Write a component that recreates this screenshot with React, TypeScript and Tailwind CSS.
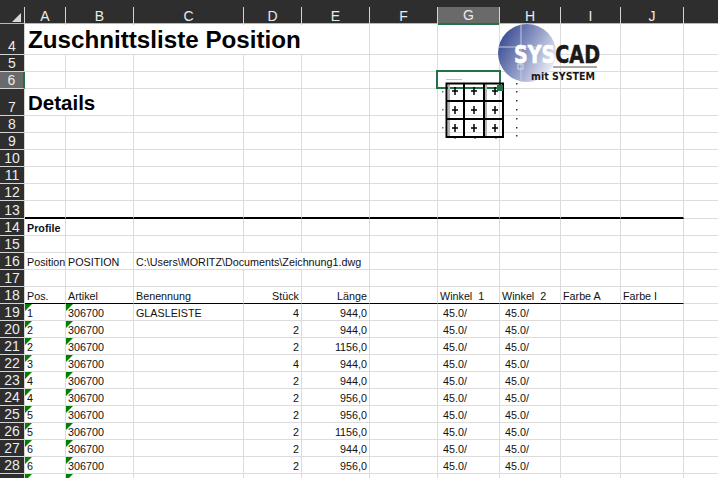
const GRID = "grid grid-cols-[25px_41px_68px_110px_58px_68px_68px_62px_61px_60px_63px_34px]";
const FONT = "font-['Liberation_Sans',Arial,sans-serif]";

const columns = ["A", "B", "C", "D", "E", "F", "G", "H", "I", "J", ""];

const details = [
  ["1", "GLASLEISTE", "4", "944,0"],
  ["2", "", "2", "944,0"],
  ["2", "", "2", "1156,0"],
  ["3", "", "4", "944,0"],
  ["4", "", "2", "944,0"],
  ["4", "", "2", "956,0"],
  ["5", "", "2", "956,0"],
  ["5", "", "2", "1156,0"],
  ["6", "", "2", "944,0"],
  ["6", "", "2", "956,0"],
];

function RowHead({ n, active }: { n?: number; active?: boolean }) {
  return (
    <div
      className={`flex items-end justify-center border-b border-[#d4d4d4] border-r text-[14px] leading-[16px] text-[#ececec] ${
        active ? "bg-[#6a6a6a] border-r-2 border-r-[#217346]" : "bg-[#2e2e2e] border-r-[#d4d4d4]"
      }`}
    >
      {n}
    </div>
  );
}

function Cell({
  children,
  right,
  noLine,
  tick,
  className = "",
}: {
  children?: React.ReactNode;
  right?: boolean;
  noLine?: boolean;
  tick?: boolean;
  className?: string;
}) {
  return (
    <div
      className={`relative flex items-end whitespace-pre border-b border-b-[#dcdcdc] pl-[2px] pr-[2px] text-[10.75px] leading-[13px] text-[#111] ${
        noLine ? "" : "border-r border-r-[#dcdcdc]"
      } ${right ? "justify-end" : ""} ${className}`}
    >
      {tick && (
        <span className="absolute left-0 top-0 h-0 w-0 border-r-[7px] border-t-[7px] border-r-transparent border-t-[#008000]" />
      )}
      {children}
    </div>
  );
}

function EmptyRow({ n, height, active }: { n: number; height: string; active?: boolean }) {
  return (
    <div className={`${GRID} ${height}`}>
      <RowHead n={n} active={active} />
      {columns.map((c, i) => (
        <Cell key={i} noLine={c === ""} />
      ))}
    </div>
  );
}

function TableRow({ n, pos, name, qty, len }: { n: number; pos: string; name: string; qty: string; len: string }) {
  return (
    <div className={`${GRID} h-[17px]`}>
      <RowHead n={n} />
      <Cell tick>{pos}</Cell>
      <Cell tick>306700</Cell>
      <Cell>{name}</Cell>
      <Cell right>{qty}</Cell>
      <Cell right>{len}</Cell>
      <Cell />
      <Cell className="pl-[5px]">45.0/</Cell>
      <Cell className="pl-[5px]">45.0/</Cell>
      <Cell />
      <Cell />
      <Cell noLine />
    </div>
  );
}

function Logo() {
  return (
    <svg className="absolute left-[497px] top-[22px]" width="108" height="62" viewBox="0 0 108 62">
      <defs>
        <linearGradient id="ball" x1="0" y1="0.2" x2="1" y2="0.75">
          <stop offset="0" stopColor="#33458f" />
          <stop offset="0.5" stopColor="#8d98c4" />
          <stop offset="1" stopColor="#f4f5fa" />
        </linearGradient>
      </defs>
      <circle cx="30" cy="31" r="29" fill="url(#ball)" />
      <path d="M24 2V60M1 25H58" stroke="#c6cbe2" strokeWidth="1" />
      <rect x="21" y="42" width="5" height="5" fill="none" stroke="#d5d9ea" />
      <text x="17" y="41" fontFamily="'DejaVu Sans',sans-serif" fontWeight="700" fontSize="25" strokeWidth="0.6" textLength="86" lengthAdjust="spacingAndGlyphs">
        <tspan fill="#fff" stroke="#fff">SYS</tspan>
        <tspan fill="#1c1718" stroke="#1c1718">CAD</tspan>
      </text>
      <rect x="56" y="44" width="44" height="2" fill="#a9a9a9" />
      <text x="34" y="58" fontFamily="'DejaVu Sans',sans-serif" fontWeight="700" fontSize="10.5" fill="#1c1718" textLength="64" lengthAdjust="spacingAndGlyphs">
        mit SYSTEM
      </text>
    </svg>
  );
}

function BlockPreview() {
  const xs = [455, 474, 495];
  const ys = [91, 110, 128];
  return (
    <svg className="absolute left-[436px] top-[72px]" width="90" height="72" viewBox="436 72 90 72">
      <rect x="448" y="83" width="2" height="54" fill="#b5b5b5" />
      <rect x="485" y="83" width="2" height="54" fill="#b5b5b5" />
      <path d="M446.5 83.5H503V137H446.5ZM464 83V137M484 83V137M446 101H503M446 119H503" fill="none" stroke="#000" strokeWidth="2" />
      {ys.map((y) =>
        xs.map((x) => (
          <path key={`${x}-${y}`} d={`M${x} ${y - 4}V${y + 4}M${x - 3} ${y}H${x + 3}`} stroke="#000" strokeWidth="1.5" />
        )),
      )}
      <rect x="446" y="79" width="16" height="1" fill="#c4c4c4" />
      {[83, 91, 100, 109, 118, 127, 135].map((y) => (
        <rect key={y} x="516" y={y} width="1.5" height="1.5" fill="#333" />
      ))}
      {[91, 109, 127].map((y) => (
        <rect key={y} x="442" y={y} width="1.5" height="1.5" fill="#777" />
      ))}
      {[454, 474, 495].map((x) => (
        <rect key={x} x={x} y="138" width="2" height="1" fill="#999" />
      ))}
    </svg>
  );
}

export default function App() {
  return (
    <div className={`relative h-[478px] w-[718px] overflow-hidden bg-white ${FONT}`}>
      {/* column headers */}
      <div className="h-[7px] bg-[#2e2e2e]" />
      <div className={`${GRID} h-[17px] border-b border-[#b8b8b8] bg-[#2e2e2e]`}>
        <div className="relative border-r border-[#d4d4d4]">
          <span className="absolute bottom-[3px] right-[3px] h-0 w-0 border-b-[9px] border-l-[9px] border-b-[#d9d9d9] border-l-transparent" />
        </div>
        {columns.map((c) => (
          <div
            key={c || "K"}
            className={`flex items-center justify-center text-[14px] leading-[16px] text-[#ececec] ${
              c === "G" ? "border-b-2 border-r border-b-[#217346] border-r-[#d4d4d4] bg-[#6a6a6a]" : c ? "border-r border-[#d4d4d4]" : ""
            }`}
          >
            {c}
          </div>
        ))}
      </div>

      <div className={`${GRID} h-[31px]`}>
        <RowHead n={4} />
        <Cell noLine className="col-span-4 pl-[3px] text-[24.2px] font-bold leading-[28px] text-black">
          Zuschnittsliste Position
        </Cell>
        <Cell className="col-start-6" />
        <Cell />
        <Cell />
        <Cell />
        <Cell />
        <Cell />
        <Cell noLine />
      </div>
      <EmptyRow n={5} height="h-[17px]" />
      <EmptyRow n={6} height="h-[17px]" active />
      <div className={`${GRID} h-[27px]`}>
        <RowHead n={7} />
        <Cell className="col-span-2 pl-[3px] text-[20.5px] font-bold leading-[24px] text-black">Details</Cell>
        {columns.slice(2).map((c, i) => (
          <Cell key={i} noLine={c === ""} />
        ))}
      </div>
      {[8, 9, 10, 11, 12].map((n) => (
        <EmptyRow key={n} n={n} height="h-[17px]" />
      ))}
      <div className={`${GRID} h-[18px]`}>
        <RowHead n={13} />
        {columns.map((c, i) => (
          <Cell key={i} noLine={c === ""} className={c ? "border-b-2 border-b-black" : ""} />
        ))}
      </div>
      <div className={`${GRID} h-[17px]`}>
        <RowHead n={14} />
        <Cell className="font-bold">Profile</Cell>
        {columns.slice(1).map((c, i) => (
          <Cell key={i} noLine={c === ""} />
        ))}
      </div>
      <EmptyRow n={15} height="h-[17px]" />
      <div className={`${GRID} h-[17px]`}>
        <RowHead n={16} />
        <Cell>Position</Cell>
        <Cell>POSITION</Cell>
        <Cell className="col-span-3">C:\Users\MORITZ\Documents\Zeichnung1.dwg</Cell>
        {columns.slice(5).map((c, i) => (
          <Cell key={i} noLine={c === ""} />
        ))}
      </div>
      <EmptyRow n={17} height="h-[17px]" />
      <div className={`${GRID} h-[17px]`}>
        <RowHead n={18} />
        <Cell className="border-b-black">Pos.</Cell>
        <Cell className="border-b-black">Artikel</Cell>
        <Cell className="border-b-black">Benennung</Cell>
        <Cell right className="border-b-black">Stück</Cell>
        <Cell right className="border-b-black">Länge</Cell>
        <Cell className="border-b-black" />
        <Cell className="border-b-black">{"Winkel  1"}</Cell>
        <Cell className="border-b-black">{"Winkel  2"}</Cell>
        <Cell className="border-b-black">Farbe A</Cell>
        <Cell className="border-b-black">Farbe I</Cell>
        <Cell noLine />
      </div>
      {details.map((d, i) => (
        <TableRow key={i} n={19 + i} pos={d[0]} name={d[1]} qty={d[2]} len={d[3]} />
      ))}
      {/* row 29 is only just in view, its text falls below the window */}
      <div className={`${GRID} h-[17px]`}>
        <RowHead />
        <Cell tick />
        <Cell tick />
        {columns.slice(2).map((c, i) => (
          <Cell key={i} noLine={c === ""} />
        ))}
      </div>

      {/* picture objects and selection sit over the sheet */}
      <div className="absolute left-[436px] top-[70px] h-[19px] w-[65px] border-2 border-[#217346]" />
      <BlockPreview />
      <div className="absolute left-[497px] top-[85px] h-[6px] w-[6px] bg-[#217346]" />
      <Logo />
    </div>
  );
}
